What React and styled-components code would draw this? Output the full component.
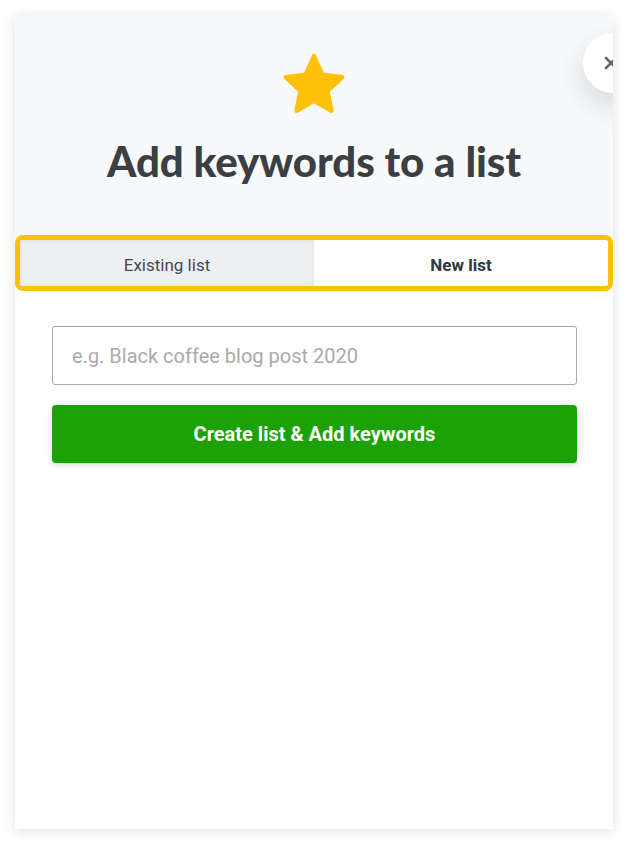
import styled, { createGlobalStyle } from 'styled-components';

const GlobalStyle = createGlobalStyle`
  html, body {
    margin: 0;
    padding: 0;
    background: #ffffff;
  }
  body {
    font-family: Roboto, "Liberation Sans", sans-serif;
  }
  * {
    box-sizing: border-box;
  }
`;

const Page = styled.div`
  width: 628px;
  height: 844px;
  padding: 15px 15px 15px 15px;
`;

const Panel = styled.div`
  position: relative;
  width: 598px;
  height: 814px;
  background: #ffffff;
  overflow: hidden;
  box-shadow: 0 2px 12px rgba(0, 0, 0, 0.12);
  display: flex;
  flex-direction: column;
`;

const Header = styled.div`
  background: #f8f9fb;
  display: flex;
  flex-direction: column;
  align-items: center;
  padding-top: 37px;
  height: 248px;
`;

const Title = styled.h1`
  margin: 22px 0 0 0;
  font-family: Lato, "Noto Sans", sans-serif;
  font-weight: 900;
  font-size: 42px;
  letter-spacing: -0.1px;
  color: #3b3f44;
`;

const CloseButton = styled.button`
  position: absolute;
  top: 18px;
  right: -30px;
  width: 60px;
  height: 60px;
  border-radius: 50%;
  border: none;
  background: #ffffff;
  box-shadow: 0 12px 32px rgba(0, 0, 0, 0.14);
  display: flex;
  align-items: center;
  justify-content: flex-start;
  padding-left: 21px;
  color: #666;
`;

const Tabs = styled.div`
  margin-top: -28px;
  height: 56px;
  border: 5px solid #ffc107;
  border-radius: 8px;
  display: grid;
  grid-template-columns: 1fr 1fr;
  overflow: hidden;
  background: #ffffff;
`;

const Tab = styled.div`
  display: flex;
  align-items: center;
  justify-content: center;
  padding-top: 3px;
  font-size: 17px;
  color: ${(p) => (p.active ? '#33373b' : '#45494e')};
  font-weight: ${(p) => (p.active ? 700 : 400)};
  background: ${(p) => (p.active ? '#ffffff' : '#edf0f3')};
  box-shadow: ${(p) => (p.active ? 'none' : 'inset 0 0 4px rgba(0,0,0,0.08)')};
`;

const Body = styled.div`
  padding: 35px 36px 0 37px;
  display: flex;
  flex-direction: column;
  gap: 20px;
`;

const Input = styled.input`
  height: 59px;
  border: 1px solid #aaaaaa;
  border-radius: 3px;
  padding: 0 19px;
  font-family: Roboto, sans-serif;
  font-size: 20px;
  color: #333;
  &::placeholder {
    color: #aaaaaa;
  }
`;

const SubmitButton = styled.button`
  height: 58px;
  border: none;
  border-radius: 4px;
  background: #1ca205;
  color: #ffffff;
  font-family: Roboto, sans-serif;
  font-weight: 700;
  font-size: 20px;
  box-shadow: 0 2px 6px rgba(0, 0, 0, 0.15);
`;

const Star = () => (
  <svg width='66' height='62' viewBox='0 0 24 23' fill='#ffc107' stroke='#ffc107' strokeWidth='1.6' strokeLinejoin='round'>
    <path d='M12 1.5l3.1 6.9 7.4 0.9-5.5 5.1 1.5 7.4L12 18.1l-6.5 3.7 1.5-7.4L1.5 9.3l7.4-0.9z' />
  </svg>
);

const App = () => (
  <>
    <GlobalStyle />
    <Page>
      <Panel>
        <Header>
          <Star />
          <Title>Add keywords to a list</Title>
        </Header>
        <CloseButton type='button'>
          <svg width='14' height='14' viewBox='0 0 14 14' stroke='currentColor' strokeWidth='2.6' strokeLinecap='round'>
            <path d='M2 2l10 10M12 2L2 12' />
          </svg>
        </CloseButton>
        <Tabs>
          <Tab>Existing list</Tab>
          <Tab active>New list</Tab>
        </Tabs>
        <Body>
          <Input type='text' placeholder='e.g. Black coffee blog post 2020' />
          <SubmitButton type='button'>Create list &amp; Add keywords</SubmitButton>
        </Body>
      </Panel>
    </Page>
  </>
);

export default App;
